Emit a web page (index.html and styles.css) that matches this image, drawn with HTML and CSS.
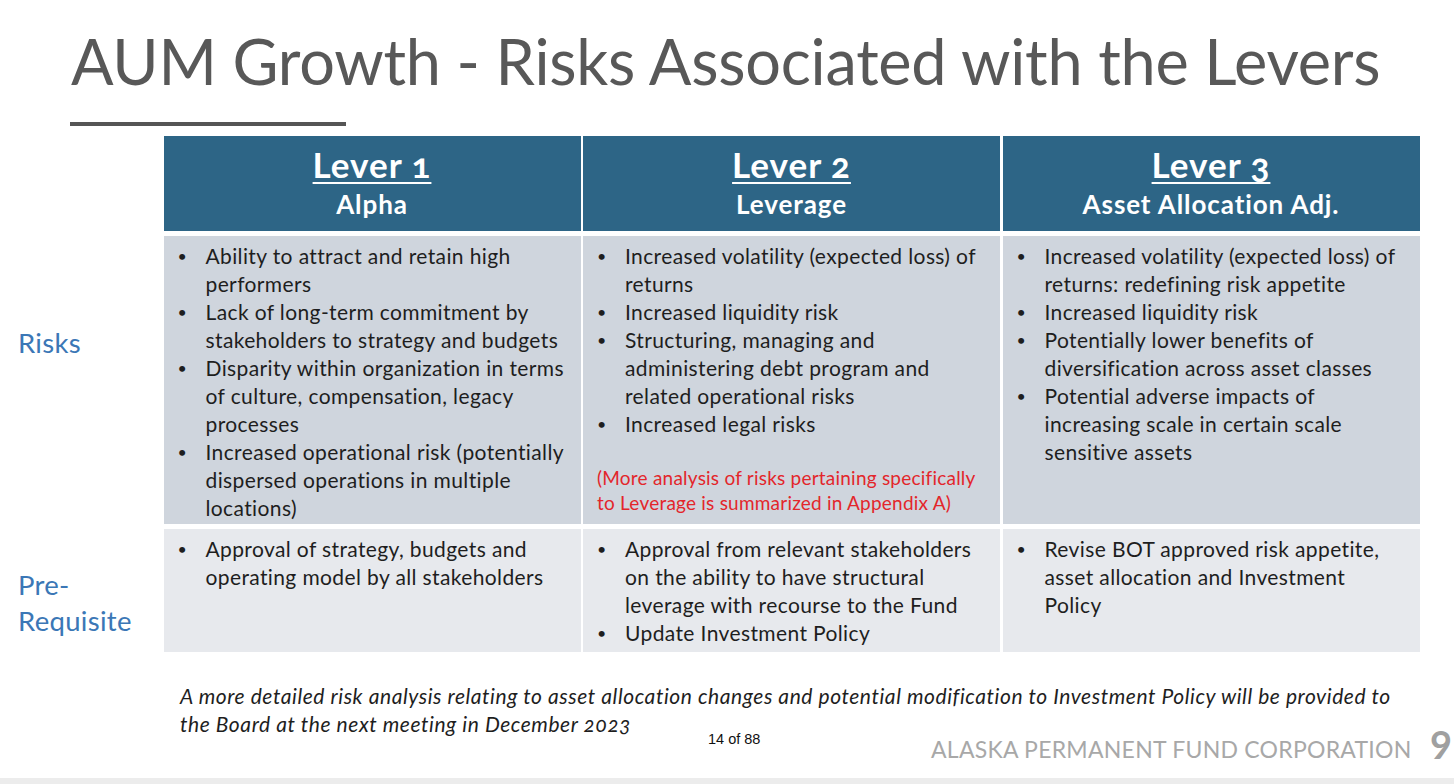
FILE: index.html
```html
<!DOCTYPE html>
<html lang="en">
<head>
<meta charset="utf-8">
<title>AUM Growth - Risks Associated with the Levers</title>
<link rel="stylesheet" href="styles.css">
</head>
<body>
<div class="slide">
  <h1 class="title">AUM Growth - Risks Associated with the Levers</h1>
  <div class="title-rule"></div>

  <div class="table">
    <div class="label-cell"></div>
    <div class="head"><div class="lever">Lever 1</div><div class="sub">Alpha</div></div>
    <div class="head"><div class="lever">Lever 2</div><div class="sub">Leverage</div></div>
    <div class="head"><div class="lever">Lever 3</div><div class="sub">Asset Allocation Adj.</div></div>

    <div class="label-cell"><div class="label label-risks">Risks</div></div>
    <div class="cell risks">
      <ul>
        <li>Ability to attract and retain high performers</li>
        <li>Lack of long-term commitment by stakeholders to strategy and budgets</li>
        <li>Disparity within organization in terms of culture, compensation, legacy processes</li>
        <li>Increased operational risk (potentially dispersed operations in multiple locations)</li>
      </ul>
    </div>
    <div class="cell risks">
      <ul>
        <li>Increased volatility (expected loss) of returns</li>
        <li>Increased liquidity risk</li>
        <li>Structuring, managing and administering debt program and related operational risks</li>
        <li>Increased legal risks</li>
      </ul>
      <p class="note">(More analysis of risks pertaining specifically to Leverage is summarized in Appendix A)</p>
    </div>
    <div class="cell risks">
      <ul>
        <li>Increased volatility (expected loss) of returns: redefining risk appetite</li>
        <li>Increased liquidity risk</li>
        <li>Potentially lower benefits of diversification across asset classes</li>
        <li>Potential adverse impacts of increasing scale in certain scale sensitive assets</li>
      </ul>
    </div>

    <div class="label-cell"><div class="label label-pre">Pre-<br>Requisite</div></div>
    <div class="cell pre">
      <ul>
        <li>Approval of strategy, budgets and operating model by all stakeholders</li>
      </ul>
    </div>
    <div class="cell pre">
      <ul>
        <li>Approval from relevant stakeholders on the ability to have structural leverage with recourse to the Fund</li>
        <li>Update Investment Policy</li>
      </ul>
    </div>
    <div class="cell pre">
      <ul>
        <li>Revise BOT approved risk appetite, asset allocation and Investment Policy</li>
      </ul>
    </div>
  </div>

  <p class="footnote"><span class="fn-line">A more detailed risk analysis relating to asset allocation changes and potential modification to Investment Policy will be provided to</span> <span class="fn-line">the Board at the next meeting in December 2023</span></p>

  <div class="footer">
    <span class="page-of">14 of 88</span>
    <span class="corp">ALASKA PERMANENT FUND CORPORATION</span>
    <span class="num">9</span>
  </div>
  <div class="bottom-band"></div>
</div>
</body>
</html>
```

FILE: styles.css
```css
* { box-sizing: border-box; }
html, body { margin: 0; padding: 0; background: #fff; }
body {
  width: 1454px;
  height: 784px;
  overflow: hidden;
  font-family: Lato, "Open Sans", sans-serif;
  font-variant-numeric: oldstyle-nums;
  font-variant-ligatures: none;
}
.slide {
  position: relative;
  width: 1454px;
  height: 784px;
  display: flex;
  flex-direction: column;
}
.title {
  margin: 0;
  padding: 24px 0 0 71px;
  font-weight: 400;
  font-size: 63px;
  line-height: 74px;
  color: #585858;
  letter-spacing: -0.25px;
  white-space: nowrap;
}
.title-rule {
  margin: 24px 0 0 70px;
  width: 276px;
  height: 4px;
  background: #555;
}
.table {
  margin-top: 10px;
  display: grid;
  grid-template-columns: 161px 417px 417px 417px;
  grid-template-rows: 95px 288px 123px;
  column-gap: 2.5px;
  row-gap: 5px;
}
.head {
  background: #2d6586;
  color: #fff;
  text-align: center;
  font-weight: 700;
  padding-top: 8px;
}
.lever {
  display: inline-block;
  font-size: 35px;
  line-height: 40px;
  letter-spacing: 1px;
  text-decoration: underline;
  text-decoration-thickness: 2px;
  text-underline-offset: 4px;
}
.sub {
  font-size: 26px;
  line-height: 32px;
  letter-spacing: 0.9px;
  margin-top: 4px;
}
.cell {
  color: #1e1e1e;
  font-size: 21px;
  line-height: 28px;
  letter-spacing: 0.38px;
  padding: 6px 14px 0 14px;
}
.risks { background: #cfd5dd; }
.pre { background: #e7e9ed; }
.cell ul { margin: 0; padding: 0; list-style: none; }
.cell li {
  position: relative;
  padding-left: 28px;
}
.cell li::before {
  content: "•";
  position: absolute;
  left: 0;
  top: 0;
  font-size: 16px;
}
.note {
  margin: 27px 0 0 0;
  color: #e3262b;
  font-size: 19px;
  line-height: 25px;
  letter-spacing: 0.22px;
}
.label-cell { position: relative; }
.label {
  color: #3b77b6;
  font-size: 27.5px;
  line-height: 36px;
  letter-spacing: 0.3px;
  padding-left: 18px;
}
.label-risks { margin-top: 89px; }
.label-pre { margin-top: 38px; }
.footnote {
  margin: 30px 0 0 180px;
  font-style: italic;
  font-size: 21px;
  line-height: 28px;
  letter-spacing: 0.57px;
  color: #1e1e1e;
}
.fn-line {
  display: block;
  width: fit-content;
}
.footer {
  position: relative;
  height: 44px;
}
.page-of {
  position: absolute;
  left: 708px;
  top: -7px;
  font-family: "Liberation Sans", Arial, sans-serif;
  font-variant-numeric: normal;
  font-size: 14.5px;
  color: #111;
}
.corp {
  position: absolute;
  left: 931px;
  top: -3px;
  font-size: 23px;
  color: #a8a8a8;
  letter-spacing: 0.25px;
}
.num {
  position: absolute;
  left: 1430px;
  top: -17px;
  font-size: 38px;
  font-weight: 700;
  color: #a0a0a0;
  font-variant-numeric: lining-nums;
}
.bottom-band {
  position: absolute;
  left: 0;
  bottom: 0;
  width: 100%;
  height: 6px;
  background: #ececec;
}
```
